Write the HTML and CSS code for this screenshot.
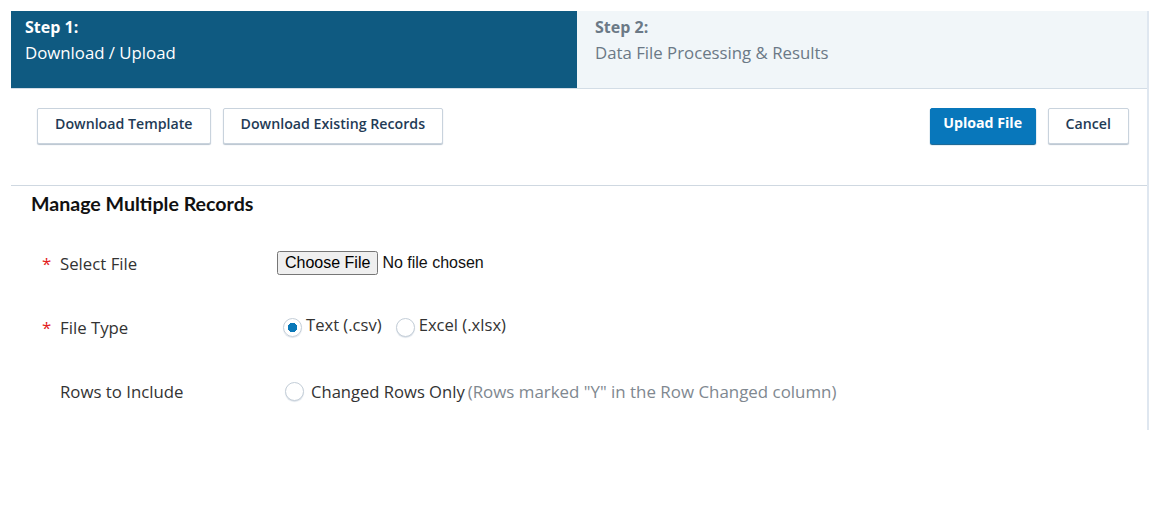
FILE: index.html
```html
<!DOCTYPE html>
<html lang="en">
<head>
    <meta charset="UTF-8">
    <meta name="viewport" content="width=device-width, initial-scale=1.0">
    <title>Manage Multiple Records</title>
    <link rel="stylesheet" href="styles.css">
</head>
<body>
    <div class="panel">
        <div class="steps">
            <div class="step active">
                <div class="step-num">Step 1:</div>
                <div class="step-name">Download / Upload</div>
            </div>
            <div class="step">
                <div class="step-num">Step 2:</div>
                <div class="step-name">Data File Processing &amp; Results</div>
            </div>
        </div>

        <div class="toolbar">
            <div class="btn-group">
                <button type="button" class="btn">Download Template</button>
                <button type="button" class="btn">Download Existing Records</button>
            </div>
            <div class="btn-group">
                <button type="button" class="btn btn-primary">Upload File</button>
                <button type="button" class="btn">Cancel</button>
            </div>
        </div>

        <h3 class="section-title">Manage Multiple Records</h3>

        <form class="upload-form">
            <div class="form-row">
                <label class="field-label"><span class="req">*</span>Select File</label>
                <div class="field">
                    <input type="file" class="file-input">
                </div>
            </div>
            <div class="form-row">
                <label class="field-label"><span class="req">*</span>File Type</label>
                <div class="field">
                    <label class="radio"><input type="radio" name="ftype" checked><span>Text (.csv)</span></label>
                    <label class="radio"><input type="radio" name="ftype"><span>Excel (.xlsx)</span></label>
                </div>
            </div>
            <div class="form-row">
                <label class="field-label"><span class="req"></span>Rows to Include</label>
                <div class="field">
                    <label class="radio radio-wide"><input type="radio" name="rows"><span>Changed Rows Only</span></label>
                    <span class="hint">(Rows marked "Y" in the Row Changed column)</span>
                </div>
            </div>
        </form>
    </div>
</body>
</html>
```

FILE: styles.css
```css
body { margin: 0; padding: 11px; font-family: "Open Sans", sans-serif; color: #333; background: #fff; }

.panel { width: 1136px; height: 419px; border-right: 2px solid #dfe7f0; }

.steps { display: flex; height: 77px; border-bottom: 1px solid #d3dde6; }
.step { flex: 1; padding: 3px 14px 0 18px; background: #f1f6f9; color: #6b7986; font-size: 16.8px; line-height: 26px; }
.step.active { flex: 0 0 566px; box-sizing: border-box; padding-left: 14px; background: #0f5a81; color: #fff; }
.step-num { font-weight: 700; font-size: 16px; }

.toolbar { display: flex; justify-content: space-between; padding: 19px 18px 41px 26px; border-bottom: 1px solid #cfd8e1; }
.btn-group { display: flex; gap: 12px; }
.btn { height: 36px; padding: 0 17px 6px; font-family: "Open Sans", sans-serif; font-size: 14.2px; font-weight: 600; color: #1f3b56; background: #fff; border: 1px solid #c9d3dd; border-radius: 2px; box-shadow: 0 1px 1px #b9c4cf; cursor: pointer; }
.btn-primary { padding: 0 12.5px 8px; font-weight: 700; background: #0877bb; border-color: #0877bb; color: #fff; box-shadow: 0 1px 1px #075a8c; }

.section-title { margin: 0; padding: 6px 0 0 20px; font-family: "Lato", sans-serif; font-size: 19.6px; line-height: 24px; font-weight: 700; color: #111; }

.upload-form { padding-top: 15px; }
.form-row { display: flex; align-items: center; height: 64px; }
.field-label { display: flex; box-sizing: border-box; width: 266px; padding-left: 31px; font-size: 16.8px; color: #333; }
.req { width: 18px; color: #e31b1b; }
.field { display: flex; align-items: center; }

.file-input { font-family: "Liberation Sans", Arial, sans-serif; font-size: 16px; color: #111; }

.radio { display: flex; align-items: center; margin: 0 8px 0 6px; font-size: 16.6px; color: #333; }
.radio span { position: relative; top: -3px; margin-left: 4px; }
.radio input { appearance: none; width: 19px; height: 19px; margin: 0; border: 1px solid #c4ced8; border-radius: 50%; background: #fff; box-shadow: 0 1px 1px #dde3ea; }
.radio input:checked { background: radial-gradient(circle, #0a78b8 0 4.5px, #fff 5px); }
.radio-wide { margin: 0 3px 0 8px; }
.radio-wide span { top: 0; margin-left: 7px; }
.hint { font-size: 16.9px; color: #808890; }
```
